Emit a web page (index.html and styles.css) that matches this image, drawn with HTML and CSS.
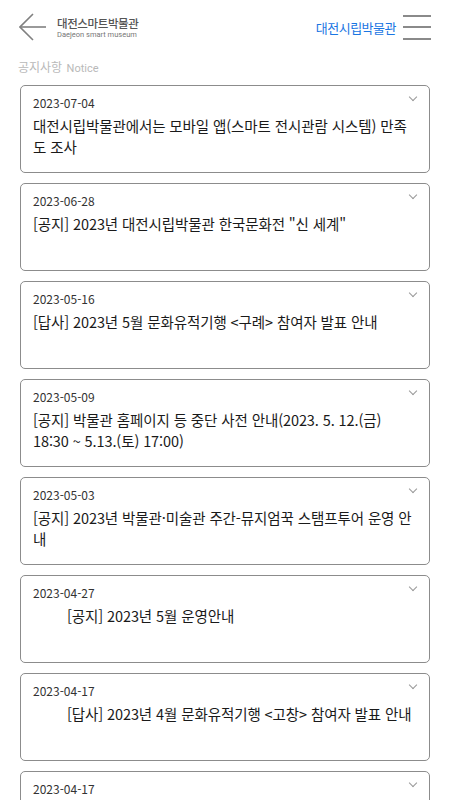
FILE: index.html
```html
<!DOCTYPE html>
<html lang="ko">
<head>
<meta charset="UTF-8">
<title>공지사항</title>
<meta name="viewport" content="width=device-width,initial-scale=1" />
<link rel="stylesheet" href="styles.css">
</head>
<body>

  <header class="top">
    <a class="back" href="#">
      <svg viewBox="0 0 28 28" width="28" height="28">
        <line x1="1" y1="14" x2="27" y2="14"/>
        <polyline points="14,1 1,14 14,27"/>
      </svg>
    </a>
    <div class="logo">
      <div class="logo-ko">대전스마트박물관</div>
      <div class="logo-en">Daejeon smart museum</div>
    </div>
    <div class="site">대전시립박물관</div>
    <a class="menu" href="#">
      <span></span><span></span><span></span>
    </a>
  </header>

  <h2 class="section">공지사항 <small>Notice</small></h2>

  <ul class="notices">
    <li class="card">
      <div class="date">2023-07-04</div>
      <div class="title">대전시립박물관에서는 모바일 앱(스마트 전시관람 시스템) 만족도 조사</div>
      <i class="chev"></i>
    </li>
    <li class="card">
      <div class="date">2023-06-28</div>
      <div class="title">[공지] 2023년 대전시립박물관 한국문화전 "신 세계"</div>
      <i class="chev"></i>
    </li>
    <li class="card">
      <div class="date">2023-05-16</div>
      <div class="title">[답사] 2023년 5월 문화유적기행 &lt;구례&gt; 참여자 발표 안내</div>
      <i class="chev"></i>
    </li>
    <li class="card">
      <div class="date">2023-05-09</div>
      <div class="title">[공지] 박물관 홈페이지 등 중단 사전 안내(2023. 5. 12.(금) 18:30 ~ 5.13.(토) 17:00)</div>
      <i class="chev"></i>
    </li>
    <li class="card">
      <div class="date">2023-05-03</div>
      <div class="title">[공지] 2023년 박물관·미술관 주간-뮤지엄꾹 스탬프투어 운영 안내</div>
      <i class="chev"></i>
    </li>
    <li class="card">
      <div class="date">2023-04-27</div>
      <div class="title indent">[공지] 2023년 5월 운영안내</div>
      <i class="chev"></i>
    </li>
    <li class="card">
      <div class="date">2023-04-17</div>
      <div class="title indent">[답사] 2023년 4월 문화유적기행 &lt;고창&gt; 참여자 발표 안내</div>
      <i class="chev"></i>
    </li>
    <li class="card">
      <div class="date">2023-04-17</div>
      <div class="title indent">[답사] 2023년 4월 문화유적기행 참여자 안내</div>
      <i class="chev"></i>
    </li>
  </ul>

</body>
</html>
```

FILE: styles.css
```css
body {
  margin: 0;
  font-family: "Noto Sans CJK KR", "Noto Sans", sans-serif;
  background: #fff;
  color: #222;
}

.top {
  display: flex;
  align-items: center;
  height: 54px;
  padding: 0 19px 0 19px;
}
.back {
  display: flex;
  width: 28px;
  height: 28px;
}
.back svg {
  stroke: #808080;
  stroke-width: 1.6px;
  fill: none;
}
.logo {
  margin-left: 10px;
  flex: 1;
  padding-top: 2px;
}
.logo-ko {
  font-size: 11.5px;
  line-height: 13px;
  color: #555;
  font-weight: 500;
  letter-spacing: -0.4px;
}
.logo-en {
  font-family: Roboto, "Noto Sans", sans-serif;
  font-size: 7.5px;
  line-height: 9px;
  color: #777;
}
.site {
  font-size: 13px;
  color: #1a76e3;
  margin-right: 7px;
  letter-spacing: -0.5px;
}
.menu {
  display: flex;
  flex-direction: column;
  justify-content: space-between;
  width: 28px;
  height: 25px;
}
.menu span {
  height: 2px;
  background: #8a8a8a;
}

.section {
  margin: 4px 0 7px 18px;
  font-size: 12px;
  font-weight: normal;
  color: #b9b9b9;
  line-height: 18px;
}
.section small {
  font-family: Roboto, "Noto Sans", sans-serif;
  font-size: 11px;
  margin-left: 1px;
}

.notices {
  list-style: none;
  margin: 0;
  padding: 0 20px;
}
.card {
  position: relative;
  box-sizing: border-box;
  height: 88px;
  margin-bottom: 10px;
  padding: 8px 14px 0 12px;
  border: 1px solid #8c8c8c;
  border-radius: 5px;
}
.date {
  font-size: 12px;
  line-height: 18px;
  color: #333;
}
.title {
  margin-top: 3px;
  font-size: 14.5px;
  line-height: 21px;
  letter-spacing: -0.1px;
  color: #1a1a1a;
}
.title.indent {
  padding-left: 34px;
}
.chev {
  position: absolute;
  top: 8px;
  right: 13px;
  width: 5px;
  height: 5px;
  border-right: 1px solid #999;
  border-bottom: 1px solid #999;
  transform: rotate(45deg);
}
```
